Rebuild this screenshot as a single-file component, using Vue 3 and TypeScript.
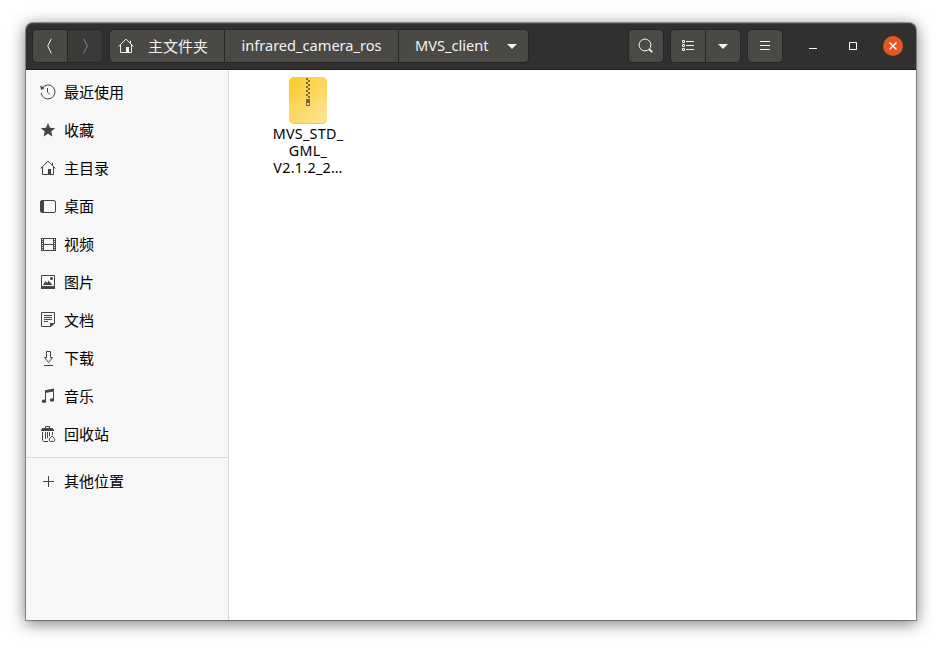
<script setup lang="ts">
interface Place {
  label: string
  icon: string
}

const places: Place[] = [
  { label: '最近使用', icon: 'recent' },
  { label: '收藏', icon: 'star' },
  { label: '主目录', icon: 'home' },
  { label: '桌面', icon: 'desktop' },
  { label: '视频', icon: 'video' },
  { label: '图片', icon: 'picture' },
  { label: '文档', icon: 'document' },
  { label: '下载', icon: 'download' },
  { label: '音乐', icon: 'music' },
  { label: '回收站', icon: 'trash' },
]

const fileNameLines: string[] = ['MVS_STD_', 'GML_', 'V2.1.2_2…']
const zipTeeth: number[] = Array.from({ length: 10 }, (_, i) => i)
</script>

<template>
  <div class="stage">
    <div class="window">
      <header class="bar">
        <div class="group nav">
          <button class="btn" type="button">
            <svg width="16" height="16" viewBox="0 0 16 16"><path d="M9.300 .7 5.700 8l3.600 7.300" class="line" /></svg>
          </button>
          <button class="btn off" type="button">
            <svg width="16" height="16" viewBox="0 0 16 16"><path d="M6.700 .7 10.300 8l-3.600 7.300" class="line" /></svg>
          </button>
        </div>
        <div class="group path">
          <button class="btn crumb home" type="button">
            <svg width="16" height="16" viewBox="0 0 16 16">
              <path d="M.6 8.500 8 1.100l7.400 7.400M2.500 7v7.500h11V7M12.500 5.200V2.600" class="line" />
              <path d="M8 9h3v5.500H8z" class="solid" />
            </svg>
            <span class="label">主文件夹</span>
          </button>
          <button class="btn crumb middle" type="button"><span class="latin label">infrared_camera_ros</span></button>
          <button class="btn crumb last" type="button">
            <span class="latin label client">MVS_client</span>
            <svg width="10" height="5" viewBox="0 0 10 5"><path d="M0 0h10L5 5z" class="solid" /></svg>
          </button>
        </div>
        <div class="space"></div>
        <button class="btn single" type="button">
          <svg width="16" height="16" viewBox="0 0 16 16"><circle cx="7" cy="7" r="5.900" class="line" /><path d="m11 11 3.200 3.200" class="line thick" /></svg>
        </button>
        <div class="group view">
          <button class="btn" type="button">
            <svg width="16" height="16" viewBox="0 0 16 16"><path d="M2.500 2.500h2v2h-2zM2.500 6.500h2v2h-2zM2.500 10.500h2v2h-2zM6 3.500h8M6 7.500h8M6 11.500h8" class="line" /></svg>
          </button>
          <button class="btn" type="button">
            <svg width="10" height="5" viewBox="0 0 10 5"><path d="M0 0h10L5 5z" class="solid" /></svg>
          </button>
        </div>
        <button class="btn single" type="button">
          <svg width="16" height="16" viewBox="0 0 16 16"><path d="M3 3.500h10M3 7.500h10M3 11.500h10" class="line" /></svg>
        </button>
        <div class="controls">
          <svg width="20" height="20" viewBox="0 0 20 20"><path d="M6 12.500h8" class="line" /></svg>
          <svg width="20" height="20" viewBox="0 0 20 20"><path d="M6.500 6.500h7v7h-7z" class="line" /></svg>
          <svg width="20" height="20" viewBox="0 0 20 20"><circle cx="10" cy="10" r="10" fill="#e95420" /><path d="m6.500 6.500 7 7m0-7-7 7" class="line close" /></svg>
        </div>
      </header>
      <div class="body">
        <nav class="side">
          <a v-for="place in places" :key="place.icon" class="place">
            <svg width="16" height="16" viewBox="0 0 16 16">
              <g v-if="place.icon === 'recent'">
                <path d="M2.100 4.200A7 7 0 1 1 1.100 9M7.500 4v4.200l2.300 2.300" class="line" />
                <path d="m.2 1.600 1 4.500 3.500-2.200z" class="solid" />
              </g>
              <path v-else-if="place.icon === 'star'" d="m8 1 2 4.800 5.200.4-4 3.400L12.500 14.500 8 11.700l-4.500 2.800 1.300-4.900-4-3.400L6 5.800z" class="solid" />
              <g v-else-if="place.icon === 'home'">
                <path d="M.6 8.500 8 1.100l7.400 7.400M2.500 7v7.500h11V7M12.500 5.200V2.600" class="line" />
                <path d="M8 9h3v5.500H8z" class="solid" />
              </g>
              <g v-else-if="place.icon === 'desktop'">
                <rect x=".5" y="2.500" width="15" height="12" rx="1.500" class="line" />
                <path d="M1 3h3v11H1z" class="solid" />
              </g>
              <g v-else-if="place.icon === 'video'">
                <path d="M3.500 2v13M13.500 2v13M4 2.500h9M4 8.500h9M4 14.500h9" class="line" />
                <path d="M1.500 2v13M15.500 2v13" class="line" />
                <path d="M2.500 2v13M14.500 2v13" class="line film" />
              </g>
              <g v-else-if="place.icon === 'picture'">
                <path d="M1.500 1.500h13v13h-13z" class="line" />
                <path d="M1 12h14v3H1zM3 11l2.500-4 1.700 2L8.500 6.500 12.500 11z" class="solid" />
                <circle cx="11.500" cy="4.500" r="1.500" class="solid" />
              </g>
              <g v-else-if="place.icon === 'document'">
                <path d="M1.500 .5h13v10.500l-3.500 3.500H1.500zM4 3.500h8M4 5.500h8M4 7.500h8M4 9.500h4" class="line" />
                <path d="M10 15v-4h5z" class="solid" />
              </g>
              <path v-else-if="place.icon === 'download'" d="M6.500 1.500h4v6h2L8.500 12.500 4.500 7.500h2zM4 15.500h9" class="line" />
              <g v-else-if="place.icon === 'music'">
                <path d="M5.500 13V2.500M13.500 11.500V1.500" class="line" />
                <path d="M5 2.200 14 .5v3L5 5z" class="solid" />
                <ellipse cx="4" cy="13.200" rx="2.200" ry="1.700" class="solid" />
                <ellipse cx="12" cy="12" rx="2.200" ry="1.700" class="solid" />
              </g>
              <g v-else>
                <path d="M2.500 6v8.500l1 1H8M12.500 6v3M5.500 6v7M7.500 6v6M9.500 6v4M5.500 2.500v-2h4v2" class="line" />
                <path d="M1 4l1.500-2h10L14 4v1H1z" class="solid" />
                <path d="m12 9.800-2.200 2.400c-.8 1-.6 3.200.7 3.200h3.200c1.200 0 1.500-2 .6-3z" class="line" />
              </g>
            </svg>
            <span class="label">{{ place.label }}</span>
          </a>
          <div class="rule"></div>
          <a class="place other">
            <svg width="16" height="16" viewBox="0 0 16 16"><path d="M3 8.500h11M8.500 3v11" class="line" /></svg>
            <span class="label">其他位置</span>
          </a>
        </nav>
        <main class="files">
          <div class="file">
            <svg width="38" height="47" viewBox="0 0 38 47">
              <defs>
                <linearGradient id="archive" x1="0" y1="0" x2="1" y2="1">
                  <stop offset="0" stop-color="#fcc82b" />
                  <stop offset="1" stop-color="#fee58b" />
                </linearGradient>
              </defs>
              <rect y="1" width="38" height="46" rx="5" fill="#e3c56a" />
              <rect width="38" height="46" rx="5" fill="url(#archive)" />
              <path d="M0 23h38v18q0 5-5 5H5q-5 0-5-5z" fill="#fff" opacity=".07" />
              <rect v-for="n in zipTeeth" :key="n" :x="n % 2 ? 19 : 17" :y="n * 2 + 1" width="2" height="2" class="zip" />
              <path d="M17 22h4v7h-4zm1 4v2h2v-2z" fill-rule="evenodd" class="zip" />
            </svg>
            <div class="name"><span v-for="line in fileNameLines" :key="line">{{ line }}</span></div>
          </div>
        </main>
      </div>
    </div>
  </div>
</template>

<style>
body {
  margin: 0;
  background: #fff;
}
</style>

<style scoped>
.stage {
  box-sizing: border-box;
  width: 942px;
  height: 649px;
  padding: 23px 26px 29px;
  overflow: hidden;
  font-family: "Noto Sans", "Noto Sans CJK SC", sans-serif;
  font-size: 15px;
}
.window {
  display: flex;
  flex-direction: column;
  width: 890px;
  height: 597px;
  border-radius: 7px 7px 0 0;
  box-shadow: 0 0 0 1px rgba(0, 0, 0, .35), 0 3px 16px 1px rgba(0, 0, 0, .5);
}
.bar {
  box-sizing: border-box;
  display: flex;
  align-items: flex-start;
  height: 47px;
  padding: 7px 13px 0 7px;
  border-bottom: 1px solid #1c1a1b;
  border-radius: 7px 7px 0 0;
  background: #322f30;
  box-shadow: inset 0 1px #484546;
  color: #f2f2f2;
}
.group {
  display: flex;
  border-radius: 4px;
  box-shadow: 0 0 0 1px #272526;
}
.btn {
  display: flex;
  box-sizing: border-box;
  align-items: center;
  justify-content: center;
  width: 34px;
  height: 32px;
  padding: 0;
  border: 0;
  background: #4a4946;
  color: inherit;
  font: inherit;
}
.group .btn + .btn {
  width: 35px;
  border-left: 1px solid #272526;
}
.group .btn:first-child {
  border-radius: 4px 0 0 4px;
}
.group .btn:last-child {
  border-radius: 0 4px 4px 0;
}
.btn.off {
  background: #3b3a39;
  color: #858482;
}
.label {
  padding-bottom: 2px;
}
.path {
  margin-left: 8px;
}
.path .home {
  gap: 14px;
  width: 114px;
  justify-content: flex-start;
  padding-left: 8px;
}
.path .btn.middle {
  width: 174px;
}
.path .btn.last {
  width: 130px;
  justify-content: flex-start;
  padding-left: 16px;
}
.client {
  width: 76px;
  margin-right: 16px;
  text-align: left;
}
.latin {
  font-size: 14.6px;
  white-space: nowrap;
}
.space {
  flex: 1;
}
.btn.single {
  border-radius: 4px;
  box-shadow: 0 0 0 1px #272526;
}
.view {
  margin: 0 8px;
}
.controls {
  display: flex;
  gap: 20px;
  margin: 6px 0 0 21px;
  color: #fff;
}
.line {
  fill: none;
  stroke: currentColor;
}
.thick {
  stroke-width: 1.8;
}
.close {
  stroke-width: 1.5;
}
.film {
  stroke-dasharray: 1 1;
}
.solid {
  fill: currentColor;
}
.body {
  display: flex;
  flex: 1;
}
.side {
  box-sizing: border-box;
  width: 203px;
  padding-top: 3px;
  border-right: 1px solid #d6d6d6;
  background: #f7f7f7;
}
.place {
  display: flex;
  align-items: center;
  gap: 8px;
  height: 38px;
  padding-left: 14px;
  color: #000;
}
.place svg {
  flex: none;
  color: #444;
}
.rule {
  height: 1px;
  margin: 4px 0;
  background: #dadada;
}
.files {
  flex: 1;
  padding: 7px 0 0 32px;
  background: #fff;
}
.file {
  display: flex;
  flex-direction: column;
  align-items: center;
  width: 94px;
}
.zip {
  fill: #776b3c;
}
.name {
  display: flex;
  flex-direction: column;
  align-items: center;
  margin-top: 1px;
  color: #000;
  font-size: 14.3px;
  letter-spacing: .3px;
  line-height: 17px;
}
</style>
